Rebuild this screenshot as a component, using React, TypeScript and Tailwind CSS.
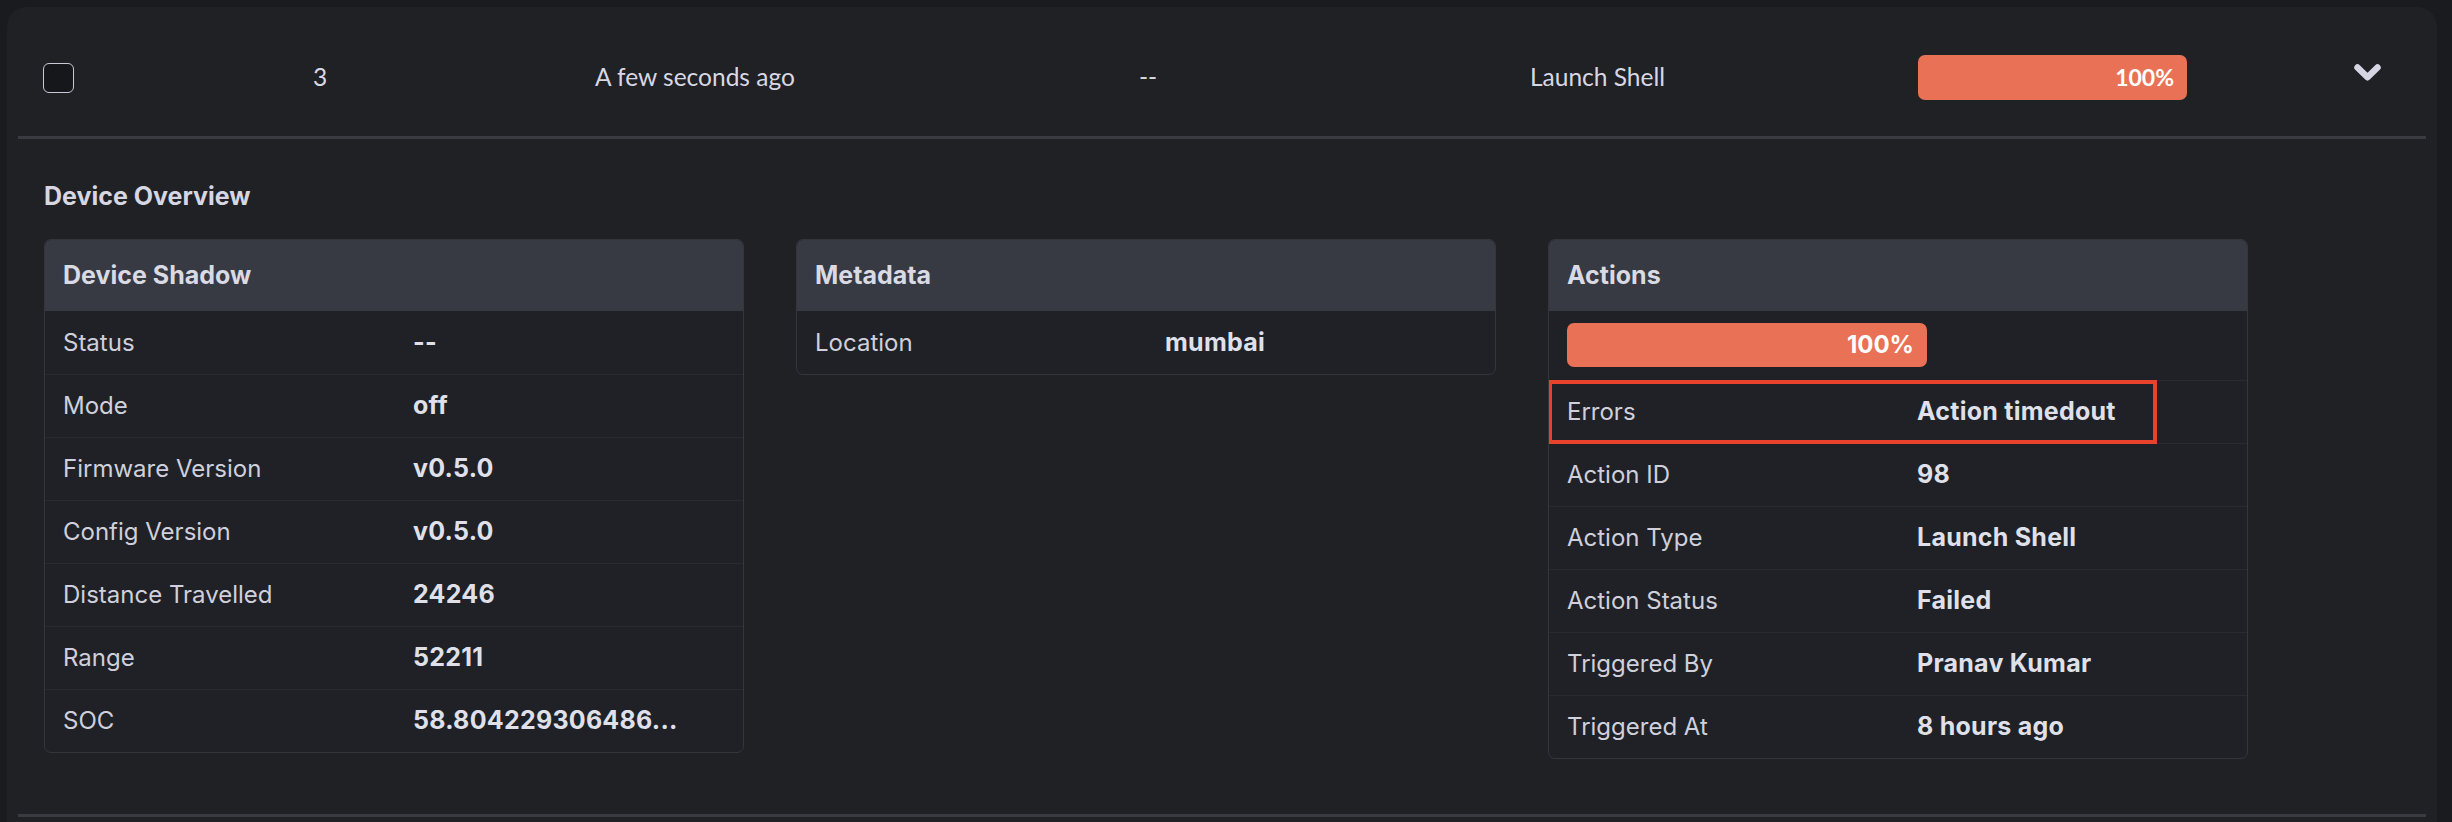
type Row = { label: string; value: string }

const shadowRows: Row[] = [
  { label: 'Status', value: '--' },
  { label: 'Mode', value: 'off' },
  { label: 'Firmware Version', value: 'v0.5.0' },
  { label: 'Config Version', value: 'v0.5.0' },
  { label: 'Distance Travelled', value: '24246' },
  { label: 'Range', value: '52211' },
  { label: 'SOC', value: '58.804229306486...' },
]

const metaRows: Row[] = [{ label: 'Location', value: 'mumbai' }]

const actionRows: Row[] = [
  { label: 'Action ID', value: '98' },
  { label: 'Action Type', value: 'Launch Shell' },
  { label: 'Action Status', value: 'Failed' },
  { label: 'Triggered By', value: 'Pranav Kumar' },
  { label: 'Triggered At', value: '8 hours ago' },
]

export default function App() {
  return (
    <div className="min-h-screen bg-[#1a1b1f] pt-[7px] pl-[7px] pr-[15px] overflow-hidden">
      <div className="bg-[#202125] rounded-t-[20px] min-h-[900px]">

        {/* ── Summary row ─────────────────────────────────────────────── */}
        <div className="flex items-center pl-[36px] pt-[48px] pb-[36px] text-[24.5px] text-[#d8d8e4] font-['Lato',sans-serif]">
          <div className="w-[270px]">
            <div className="w-[31px] h-[30px] rounded-[6px] border-[1.5px] border-[#c9c9d6] bg-[#16171b]" />
          </div>
          <div className="w-[282px]">3</div>
          <div className="w-[544px]">A few seconds ago</div>
          <div className="w-[391px]">--</div>
          <div className="w-[388px]">Launch Shell</div>
          <Progress width="w-[269px]" height="h-[45px]" text="text-[23px] font-['Lato',sans-serif] font-bold" />
          <div className="ml-[167px] mb-[8px]">
            <svg width="27" height="19" viewBox="0 0 27 19" fill="none">
              <polyline
                points="3.5,3.5 13.5,13.3 23.5,3.5"
                stroke="#d5d5e3"
                strokeWidth="6.5"
                strokeLinecap="round"
                strokeLinejoin="round"
              />
            </svg>
          </div>
        </div>

        <div className="mx-[11px] h-[3px] bg-[#3a3b40]" />

        {/* ── Expanded details ─────────────────────────────────────────── */}
        <div className="pl-[37px] pt-[41px] pb-[55px] font-['Inter',sans-serif]">
          <h2 className="text-[25px] leading-[32px] font-bold text-[#d6d7e2]">Device Overview</h2>

          <div className="mt-[27px] flex items-start gap-[52px]">
            <Panel title="Device Shadow">
              {shadowRows.map((r, i) => (
                <KV key={r.label} row={r} first={i === 0} />
              ))}
            </Panel>

            <Panel title="Metadata">
              {metaRows.map((r, i) => (
                <KV key={r.label} row={r} first={i === 0} />
              ))}
            </Panel>

            <Panel title="Actions">
              <div className="h-[69px] pl-[18px] pt-[12px]">
                <Progress width="w-[360px]" height="h-[44px]" text="text-[24px] font-bold" />
              </div>
              <div className="relative">
                <KV row={{ label: 'Errors', value: 'Action timedout' }} />
                <div className="absolute -left-px top-0 w-[609px] h-[64px] border-[4.5px] border-[#e8412c]" />
              </div>
              {actionRows.map(r => (
                <KV key={r.label} row={r} />
              ))}
            </Panel>
          </div>
        </div>

        <div className="mx-[11px] h-[3px] bg-[#3a3b40]" />
      </div>
    </div>
  )
}

// ── Sub-components ──────────────────────────────────────────────────────────

function Progress({ width, height, text }: { width: string; height: string; text: string }) {
  return (
    <div className={`${width} ${height} rounded-[7px] bg-[#e97256] flex items-center justify-end pr-[13px] text-white ${text}`}>
      100%
    </div>
  )
}

function Panel({ title, children }: { title: string; children: React.ReactNode }) {
  return (
    <div className="w-[700px] rounded-[7px] border border-[#34363c] overflow-hidden bg-[#202126]">
      <div className="h-[71px] bg-[#373a43] flex items-center pl-[18px] text-[25px] font-bold text-[#d9dae4]">
        {title}
      </div>
      {children}
    </div>
  )
}

function KV({ row, first }: { row: Row; first?: boolean }) {
  return (
    <div className={`h-[63px] grid grid-cols-[350px_1fr] items-center pl-[18px] text-[24px] ${first ? '' : 'border-t border-[#292a30]'}`}>
      <span className="text-[#cfd0dc]">{row.label}</span>
      <span className="text-[25px] font-bold tracking-[0.01em] text-[#dfe0ea]">{row.value}</span>
    </div>
  )
}
